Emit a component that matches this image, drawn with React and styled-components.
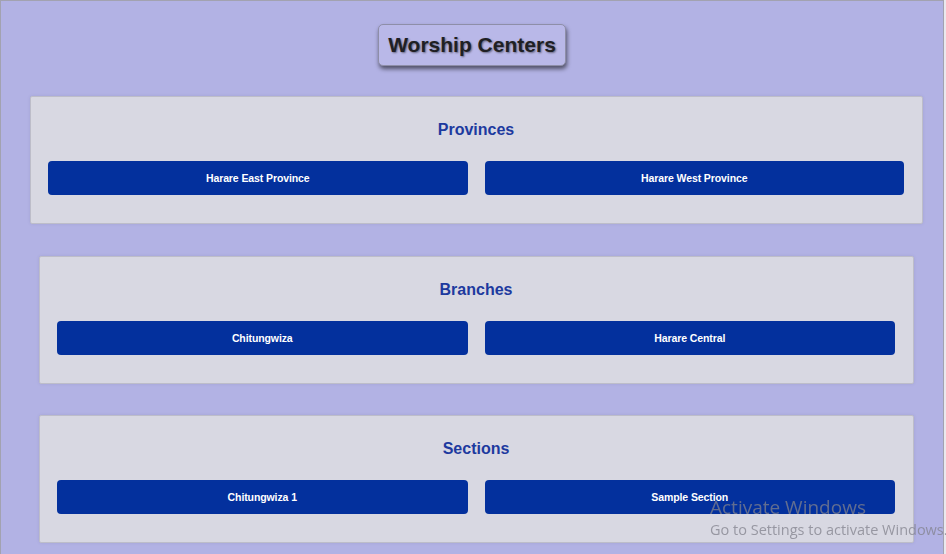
import React from 'react'
import styled, { createGlobalStyle } from 'styled-components'

const GlobalStyle = createGlobalStyle`
  html, body {
    margin: 0;
    padding: 0;
    background: #e9e9ee;
    font-family: "Liberation Sans", Arial, sans-serif;
  }
`

const Frame = styled.div`
  box-sizing: border-box;
  width: 944px;
  min-height: 554px;
  background: #b2b2e4;
  border: 1px solid #a2a2b0;
  border-bottom: none;
  padding-top: 23px;
  display: flex;
  flex-direction: column;
  align-items: flex-start;
`

const TitleRow = styled.div`
  align-self: stretch;
  display: flex;
  justify-content: center;
`

const Title = styled.h1`
  margin: 0;
  padding: 8px 9px;
  line-height: 24px;
  font-size: 21px;
  font-weight: 700;
  color: #1f1f24;
  background: #b9b8e8;
  border: 1px solid #8e8ea8;
  border-radius: 5px;
  text-shadow: 1px 1px 2px rgba(0, 0, 0, 0.45);
  box-shadow: 1px 3px 4px rgba(0, 0, 0, 0.55);
`

const Card = styled.section`
  box-sizing: border-box;
  width: ${(p) => p.$width}px;
  margin-left: ${(p) => p.$left}px;
  margin-top: ${(p) => p.$top}px;
  padding: 23px 18px 28px 17px;
  background: #d8d8e2;
  border: 1px solid #bdbdc9;
  border-radius: 2px;
  box-shadow: 0 0 3px rgba(80, 80, 120, 0.15);
`

const Heading = styled.h2`
  margin: 0 0 21px;
  line-height: 20px;
  font-size: 16px;
  font-weight: 700;
  text-align: center;
  color: #1d3a9f;
`

const ButtonGrid = styled.div`
  display: grid;
  grid-template-columns: 1fr 1fr;
  gap: 17px;
`

const ItemButton = styled.button`
  height: 34px;
  border: none;
  border-radius: 4px;
  background: #03309d;
  color: #ffffff;
  font-family: "Liberation Sans", Arial, sans-serif;
  font-size: 10.5px;
  font-weight: 700;
  letter-spacing: -0.1px;
  cursor: pointer;
`

const Watermark = styled.div`
  position: fixed;
  left: 710px;
  top: 495px;
  color: rgba(130, 130, 140, 0.75);
  font-family: "Open Sans", "Noto Sans", sans-serif;
  pointer-events: none;
  white-space: nowrap;
`

const WatermarkTitle = styled.div`
  font-size: 19px;
  line-height: 24px;
`

const WatermarkText = styled.div`
  font-size: 14.5px;
  line-height: 20px;
  margin-top: 1px;
`

const groups = [
  { title: 'Provinces', items: ['Harare East Province', 'Harare West Province'], width: 893, left: 29, top: 30 },
  { title: 'Branches', items: ['Chitungwiza', 'Harare Central'], width: 875, left: 38, top: 32 },
  { title: 'Sections', items: ['Chitungwiza 1', 'Sample Section'], width: 875, left: 38, top: 31 },
]

export default function App() {
  return (
    <>
      <GlobalStyle />
      <Frame>
        <TitleRow>
          <Title>Worship Centers</Title>
        </TitleRow>
        {groups.map((g) => (
          <Card key={g.title} $width={g.width} $left={g.left} $top={g.top}>
            <Heading>{g.title}</Heading>
            <ButtonGrid>
              {g.items.map((item) => (
                <ItemButton key={item}>{item}</ItemButton>
              ))}
            </ButtonGrid>
          </Card>
        ))}
      </Frame>
      <Watermark>
        <WatermarkTitle>Activate Windows</WatermarkTitle>
        <WatermarkText>Go to Settings to activate Windows.</WatermarkText>
      </Watermark>
    </>
  )
}
